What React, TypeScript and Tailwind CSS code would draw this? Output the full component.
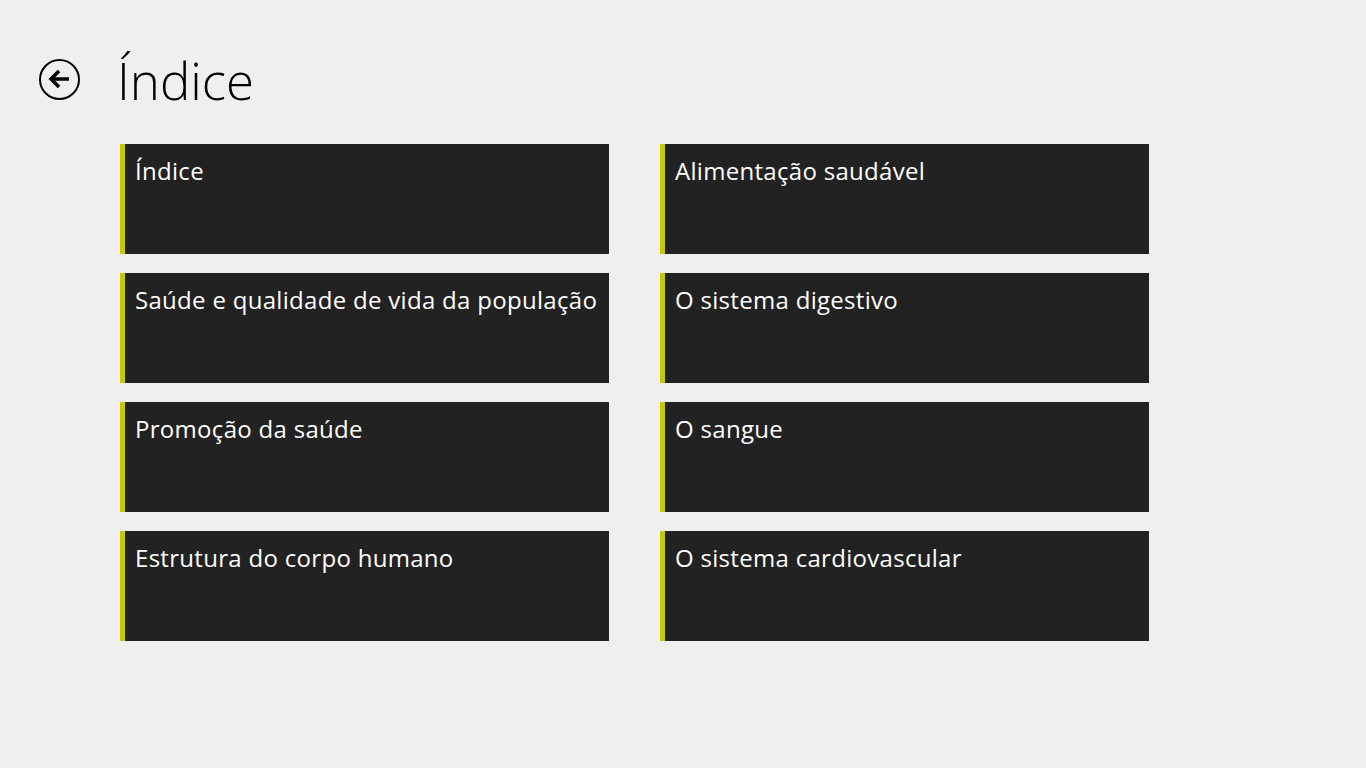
import React from "react";

const left = [
  "Índice",
  "Saúde e qualidade de vida da população",
  "Promoção da saúde",
  "Estrutura do corpo humano",
];
const right = [
  "Alimentação saudável",
  "O sistema digestivo",
  "O sangue",
  "O sistema cardiovascular",
];

const Tile = ({ title }: { title: string }) => (
  <div className="flex h-[110px] w-[489px] bg-[#222222]">
    <div className="w-[5px] bg-[#c8c800]" />
    <div className="pl-[10px] pt-[11px] text-[24px] leading-[32px] tracking-[0.3px] text-white">{title}</div>
  </div>
);

const App = () => {
  return (
    <div
      className="h-[768px] w-full overflow-hidden bg-[#efefef] pt-[47px]"
      style={{ fontFamily: '"Open Sans", "Noto Sans", sans-serif' }}
    >
      <div className="flex h-[64px] items-center pl-[39px]">
        <button className="flex h-[41px] w-[41px] items-center justify-center rounded-full border-2 border-black">
          <svg width="24" height="20" viewBox="0 0 24 20">
            <path d="M11 2 L3 10 L11 18" fill="none" stroke="black" strokeWidth="3.5" />
            <path d="M4 10 H21" stroke="black" strokeWidth="3.5" />
          </svg>
        </button>
        <h1 className="ml-[37px] mt-[2px] text-[51px] font-light leading-[64px] text-black">Índice</h1>
      </div>
      <div className="ml-[120px] mt-[33px] grid w-fit grid-cols-[489px_489px] gap-x-[51px] gap-y-[19px]">
        {left.map((l, i) => (
          <React.Fragment key={i}>
            <Tile title={l} />
            <Tile title={right[i]} />
          </React.Fragment>
        ))}
      </div>
    </div>
  );
};

export default App;
